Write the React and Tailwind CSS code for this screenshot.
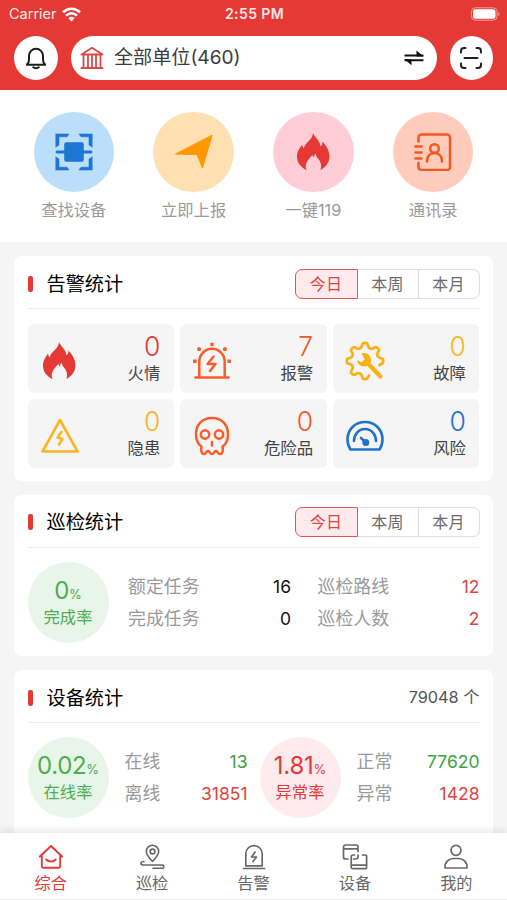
import React from "react";

const flamePath =
  "M16 0C17.4 4 22.6 6.6 23.6 13.4C25 12.2 25.6 10.4 25.6 8.2C28.4 12 31.8 16 32.4 22C33 28.8 29.2 33.8 23.4 37C25 32.4 23.6 28.6 21.4 26C19.8 24 19 22.6 18.6 20.4C17.4 21.6 17 23 17.2 24.6C15.8 23.8 15.6 22.8 15.6 22C13 24.6 6.4 30.4 9.6 37C3.4 34 0 29.6 0 23.4C0 18.4 2.6 15.6 5 11.6C5.2 13.4 5.8 14.6 6.8 15.4C7.8 9.4 15.6 7.4 16 0Z";

// Seven teeth, clockwise from the bottom; the lower right stays open for the wrench.
function gearOutline() {
  const at = (deg, r) => {
    const a = (deg * Math.PI) / 180;
    return `${(20 + r * Math.cos(a)).toFixed(2)} ${(20 + r * Math.sin(a)).toFixed(2)}`;
  };
  let d = `M${at(74, 15)}`;
  for (let i = 0; i < 7; i++) {
    const c = 90 + i * 45;
    d += `L${at(c - 9, 17)}Q${at(c - 7, 18.4)} ${at(c, 18.2)}Q${at(c + 7, 18.4)} ${at(c + 9, 17)}`;
    if (i < 6) d += `C${at(c + 14, 12.6)} ${at(c + 31, 12.6)} ${at(c + 36, 17)}`;
  }
  return d + `L${at(376, 15)}`;
}

function Svg({ w, h, className = "", sw = 2, children }) {
  return (
    <svg
      width={w}
      height={h}
      viewBox={`0 0 ${w} ${h}`}
      fill="none"
      stroke="currentColor"
      strokeWidth={sw}
      strokeLinecap="round"
      strokeLinejoin="round"
      className={`shrink-0 ${className}`}
    >
      {children}
    </svg>
  );
}

const Flame = () => (
  <Svg w={33} h={38} className="text-[#e53935]">
    <path d={flamePath} fill="currentColor" stroke="none" />
  </Svg>
);

const Siren = () => (
  <Svg w={38} h={38} sw={2.5} className="text-[#fb5b28]">
    <path d="M6.300 34V19.500a12.700 12.700 0 0 1 25.400 0V34" />
    <path d="M2.500 35.500h33" />
    <path d="M20.500 14.500L14.500 22h8L17 29" strokeWidth="2.400" />
    <g fill="currentColor" stroke="none">
      <rect x="17.300" y="0.800" width="3.400" height="3.400" rx="0.800" />
      <rect x="4.300" y="5.300" width="3.600" height="3.600" rx="1" />
      <rect x="30.100" y="5.300" width="3.600" height="3.600" rx="1" />
      <rect x="0" y="17.600" width="3.600" height="3.400" rx="0.800" />
      <rect x="34.400" y="17.600" width="3.600" height="3.400" rx="0.800" />
    </g>
  </Svg>
);

const Gear = () => (
  <Svg w={40} h={40} sw={2.7} className="text-[#fbb014]">
    <path d={gearOutline()} />
    <path d="M35.500 35.500L22 21.500" strokeWidth="4.200" />
    <path
      d="M16.500 12.300c5-1.300 10 1.700 9.700 8.200l-4.700 4.700c-5 1-9-1.500-9.300-6.200l4.300 2.300l3.300-3z"
      fill="currentColor"
      stroke="none"
    />
  </Svg>
);

const Hazard = () => (
  <Svg w={38} h={36} sw={2.6} className="text-[#fbb522]">
    <path d="M19 2L36.500 33.500h-35Z" />
    <path d="M20.500 14L16.500 19.500l5 1.500L18 26.500" strokeWidth="2.600" />
  </Svg>
);

const Skull = () => (
  <Svg w={36} h={40} sw={2.500} className="text-[#fb5b28]">
    <path d="M7.500 30.500C3.500 28 2 23 2 18C2 8.500 8.500 2 18 2s16 6.500 16 16c0 5-1.500 10-5.500 12.500c.5 3 .8 7.500-2.500 7.500s-1.500-3-4-3s-1 3-4 3s-1.500-3-4-3s-.8 3-4 3s-3-4.500-2.500-7.500z" />
    <circle cx="11" cy="18.500" r="4.200" />
    <circle cx="25" cy="18.500" r="4.200" />
    <path d="M18 26v3.500" />
  </Svg>
);

const Gauge = () => (
  <Svg w={38} h={32} sw={2.600} className="text-[#2074cc]">
    <path d="M4.500 29.500C2.500 26.500 1.500 23.500 1.500 19.500C1.500 9.500 9 2 19 2s17.500 7.500 17.500 17.500c0 4-1 7-3 10z" />
    <path d="M8 21c0-6.500 4.500-12 11-12s11 5.500 11 12" />
    <path d="M15 18l5 4.500" />
    <circle cx="19.800" cy="22.600" r="2.500" fill="currentColor" strokeWidth="2" />
  </Svg>
);

const Bell = () => (
  <Svg w={22} h={24} sw={2} className="text-[#1c1c1c]">
    <path d="M1.800 18.800h18.400M2 18.500C3.600 17 4 15.500 4 13.500V9.800a7 7 0 0 1 14 0v3.700c0 2 .4 3.500 2 5" />
    <path d="M8.200 21.300c1.400 1.200 4.200 1.200 5.600 0" />
  </Svg>
);

const Bank = () => (
  <Svg w={24} h={24} sw={1.800} className="text-[#e04845]">
    <path d="M1.500 8.500L12 1.800l10.500 6.700zM3.500 9v12M8 9v12M12 9v12M16 9v12M20.500 9v12M1.500 22h21" />
  </Svg>
);

const Swap = () => (
  <Svg w={20} h={16} className="text-[#111]">
    <path d="M0.500 5.500h19M0.500 10.300h19" strokeWidth="2" strokeLinecap="butt" />
    <path d="M12.500 0.500L19.500 6.500h-7zM7.500 15.300L0.500 9.300h7z" fill="currentColor" stroke="none" />
  </Svg>
);

const Scan = () => (
  <Svg w={24} h={24} sw={2} className="text-[#222]">
    <path d="M2 6.500V5a3 3 0 0 1 3-3h1.500M17.500 2H19a3 3 0 0 1 3 3v1.500M22 17.500V19a3 3 0 0 1-3 3h-1.500M6.500 22H5a3 3 0 0 1-3-3v-1.500M5.500 12h13" />
  </Svg>
);

const Find = () => (
  <Svg w={38} h={38} sw={1} className="text-[#1c76d2]">
    <path
      d="M1 1h13l-2 2.800H4V12l-3 2zM37 1H24l2 2.800h8V12l3 2zM1 37h13l-2-2.800H4V26l-3-2zM37 37H24l2-2.800h8V26l3-2z"
      fill="currentColor"
      strokeWidth="0.600"
    />
    <path d="M2 19h34" strokeWidth="2.800" />
    <rect x="9.200" y="9.200" width="19.600" height="19.600" rx="2" fill="currentColor" stroke="none" />
  </Svg>
);

const Plane = () => (
  <Svg w={38} h={36} sw={1} className="text-[#ff9800]">
    <path d="M37 1.500L27.500 34L22 20.500L0.800 20Z" fill="currentColor" />
  </Svg>
);

const Contacts = () => (
  <Svg w={38} h={38} sw={2.500} className="text-[#f4571f]">
    <path d="M4.500 8.500V4.500a3 3 0 0 1 3-3H33a3 3 0 0 1 3 3V34a3 3 0 0 1-3 3H7.500a3 3 0 0 1-3-3v-4" />
    <path d="M1.500 13.500h6M1.500 19.500h6M1.500 25.500h6" />
    <circle cx="20.500" cy="15.500" r="4.300" />
    <path d="M13 28.500c0-5 3-8.500 7.500-8.500s7.500 3.500 7.500 8.500" />
  </Svg>
);

const HomeIcon = () => (
  <Svg w={26} h={26} sw={1.900}>
    <path d="M1.800 12.500L13 2l11.200 10.500M3.800 11v11a1.800 1.800 0 0 0 1.800 1.800h14.800a1.800 1.800 0 0 0 1.800-1.800V11" />
    <path d="M8.200 15.500c2.500 2.600 7.100 2.600 9.600 0" />
  </Svg>
);

const RouteIcon = () => (
  <Svg w={26} h={26} sw={1.600}>
    <path d="M13.500 17.500C10 13.500 7.300 11 7.300 7.500a6.200 6.200 0 0 1 12.400 0c0 3.500-2.700 6-6.200 10z" />
    <circle cx="13.500" cy="7.500" r="2.400" />
    <path d="M5 17.500c-4 .2-4 3.500-.5 3.500H23c2.400 0 2.400 3.300 0 3.300H14" />
  </Svg>
);

const AlarmIcon = () => (
  <Svg w={26} h={26} sw={1.700}>
    <path d="M4.800 21.800V9.800a8.200 8.200 0 0 1 16.400 0v12z" />
    <path d="M2.500 24.500h21" />
    <path d="M14 8l-3.500 5h5L12 17.500" />
  </Svg>
);

const DeviceIcon = () => (
  <Svg w={26} h={26} sw={1.700}>
    <path d="M6 15H3.500a2 2 0 0 1-2-2V3a2 2 0 0 1 2-2H14a2 2 0 0 1 2 2v4.500M1.500 4.800H16" />
    <path d="M12.500 11H11a1.800 1.800 0 0 0-1.800 1.800V23a1.700 1.700 0 0 0 1.700 1.700h12A1.700 1.700 0 0 0 24.600 23V12.500A1.500 1.500 0 0 0 23.100 11h-2.500M9.200 21.200h15.400M11.500 15h2.700a1.800 1.800 0 0 0 1.800-1.800V11" />
  </Svg>
);

const UserIcon = () => (
  <Svg w={26} h={26} sw={1.700}>
    <circle cx="13" cy="6.300" r="5" />
    <path d="M2 24c-.6-5.500 3.500-9.500 9-9.500h4c5.500 0 9.600 4 9 9.500z" />
  </Svg>
);

const quick = [
  { label: "查找设备", bg: "bg-[#bbdefb]", icon: <Find /> },
  { label: "立即上报", bg: "bg-[#ffe0b2]", icon: <Plane /> },
  { label: "一键119", bg: "bg-[#ffcdd5]", icon: <Flame /> },
  { label: "通讯录", bg: "bg-[#ffccbc]", icon: <Contacts /> },
];

const alarms = [
  { label: "火情", value: 0, color: "text-[#e53935]", icon: <Flame /> },
  { label: "报警", value: 7, color: "text-[#f4572a]", icon: <Siren /> },
  { label: "故障", value: 0, color: "text-[#fbb522]", icon: <Gear /> },
  { label: "隐患", value: 0, color: "text-[#fbb522]", icon: <Hazard /> },
  { label: "危险品", value: 0, color: "text-[#f4572a]", icon: <Skull /> },
  { label: "风险", value: 0, color: "text-[#2074cc]", icon: <Gauge /> },
];

const tabs = [
  { label: "综合", icon: <HomeIcon />, active: true },
  { label: "巡检", icon: <RouteIcon /> },
  { label: "告警", icon: <AlarmIcon /> },
  { label: "设备", icon: <DeviceIcon /> },
  { label: "我的", icon: <UserIcon /> },
];

function Segment() {
  return (
    <div className="flex h-[30px] w-[185px] text-[16px] leading-none tracking-[0.3px] text-[#6b6b6b]">
      <div className="flex w-[63px] items-center justify-center rounded-l-[7px] border-[1.5px] border-[#df5553] bg-[#ffebee] text-[#e04441]">今日</div>
      <div className="flex w-[61px] items-center justify-center border-y border-r border-[#dedede]">本周</div>
      <div className="flex w-[61px] items-center justify-center rounded-r-[7px] border-y border-r border-[#dedede]">本月</div>
    </div>
  );
}

function CardHeader({ title, height, pad = "pt-[13px]", children }) {
  return (
    <div className={`flex items-start justify-between border-b border-[#ececec] ${pad} ${height}`}>
      <div className="flex h-[30px] items-center">
        <span className="h-4 w-[5px] rounded-[2px] bg-[#e53935]" />
        <span className="ml-3.5 pt-px text-[19.200px] leading-none font-normal text-black">{title}</span>
      </div>
      {children}
    </div>
  );
}

function Ring({ value, label, tone }) {
  return (
    <div className={`flex size-[81px] shrink-0 flex-col items-center rounded-full pt-[15px] ${tone}`}>
      <div className="flex h-[28px] items-baseline leading-7">
        <span className="text-[24px] tracking-[-0.3px]">{value}</span>
        <span className="text-[13px]">%</span>
      </div>
      <div className="text-[16.300px] leading-[25px]">{label}</div>
    </div>
  );
}

function Stats({ rows, className }) {
  return (
    <div className={`flex flex-col text-[17.900px] leading-8 ${className}`}>
      {rows.map(([label, value, color]) => (
        <div key={label} className="flex h-8 justify-between whitespace-nowrap">
          <span className="text-[#9a9a9a]">{label}</span>
          <span className={`text-[17.500px] leading-[31px] ${color}`}>{value}</span>
        </div>
      ))}
    </div>
  );
}

export default function App() {
  return (
    <div className="flex h-[900px] w-[507px] flex-col overflow-hidden bg-[#f5f5f5] font-[Inter,'Noto_Sans_CJK_SC',sans-serif]">
      <header className="h-[90px] shrink-0 bg-[#e53935]">
        <div className="grid h-[28px] grid-cols-3 items-center pr-[7px] pl-[9px] text-[14.500px] leading-none text-[#ffe9e8]">
          <div className="flex items-center gap-[5px]">
            <span>Carrier</span>
            <svg width="19" height="15" viewBox="0 0 19 15" fill="none" stroke="#fff" strokeWidth="2.600">
              <path d="M1 5.300c5-4.700 12-4.700 17 0M4 8.600c3.300-3 7.700-3 11 0" />
              <path d="M6.300 11c2-1.700 4.400-1.700 6.400 0L9.500 14.400z" fill="#fff" stroke="none" />
            </svg>
          </div>
          <div className="text-center text-[14px] font-semibold tracking-[0.4px]">2:55 PM</div>
          <svg className="justify-self-end" width="29" height="14" viewBox="0 0 29 14" fill="none">
            <rect x="0.500" y="0.800" width="25.500" height="12.400" rx="3.800" stroke="#f4a19f" />
            <rect x="2" y="2.300" width="22.500" height="9.400" rx="2.500" fill="#fff" />
            <path d="M27.300 5v4c1.600-.6 1.600-3.400 0-4z" fill="#f4a19f" />
          </svg>
        </div>
        <div className="flex items-center justify-between px-[14px] pt-2">
          <div className="flex size-[43.500px] items-center justify-center rounded-full bg-white"><Bell /></div>
          <div className="flex h-[43.500px] w-[366px] items-center rounded-full bg-white pr-[13px] pl-[9px]">
            <Bank />
            <span className="ml-[10.500px] flex-1 text-[19.100px] leading-none text-[#3c3c3c]">全部单位(460)</span>
            <Swap />
          </div>
          <div className="flex size-[43.500px] items-center justify-center rounded-full bg-white"><Scan /></div>
        </div>
      </header>

      <section className="flex h-[152px] shrink-0 justify-center bg-white pt-[21.500px]">
        {quick.map((q) => (
          <div key={q.label} className="flex w-[119.800px] flex-col items-center">
            <div className={`flex size-[80.500px] items-center justify-center rounded-full ${q.bg}`}>{q.icon}</div>
            <span className="mt-2 text-[16.300px] leading-5 text-[#9a9a9a]">{q.label}</span>
          </div>
        ))}
      </section>

      <main className="flex min-h-0 flex-1 flex-col gap-[13.500px] overflow-hidden px-[14px] pt-[14px]">
        <section className="h-[225px] shrink-0 rounded-[7px] bg-white px-[13.500px]">
          <CardHeader title="告警统计" height="h-[53px]"><Segment /></CardHeader>
          <div className="mt-[15px] grid grid-cols-3 gap-[6.500px]">
            {alarms.map((a) => (
              <div key={a.label} className="flex h-[68.500px] items-center justify-between rounded-[6px] bg-[#f5f5f5] pr-[13.500px]">
                <div className="flex w-[64px] justify-center pt-[5px]">{a.icon}</div>
                <div className="flex flex-col items-end pt-[2px]">
                  <span className={`text-[26.500px] leading-[27px] font-[350] ${a.color}`}>{a.value}</span>
                  <span className="text-[16.400px] leading-[26px] whitespace-nowrap text-[#444]">{a.label}</span>
                </div>
              </div>
            ))}
          </div>
        </section>

        <section className="h-[161.500px] shrink-0 rounded-[7px] bg-white px-[13.500px]">
          <CardHeader title="巡检统计" height="h-[53.500px]" pad="pt-[12.500px]"><Segment /></CardHeader>
          <div className="mt-[14px] flex items-center">
            <Ring value="0" label="完成率" tone="bg-[#e8f5e9] text-[#4caf50]" />
            <Stats className="ml-[19.500px] w-[163px]" rows={[["额定任务", 16, "text-[#111]"], ["完成任务", 0, "text-[#111]"]]} />
            <Stats className="ml-[26.500px] flex-1" rows={[["巡检路线", 12, "text-[#e04441]"], ["巡检人数", 2, "text-[#e04441]"]]} />
          </div>
        </section>

        <section className="h-[175px] shrink-0 rounded-t-[7px] bg-white px-[13.500px]">
          <CardHeader title="设备统计" height="h-[53px]" pad="pt-[13.500px]">
            <span className="text-[16.300px] leading-[29px] text-[#555]">79048 个</span>
          </CardHeader>
          <div className="mt-[14.500px] flex items-center">
            <Ring value="0.02" label="在线率" tone="bg-[#e8f5e9] text-[#4caf50]" />
            <Stats className="ml-4 w-[123px]" rows={[["在线", 13, "text-[#3f9f43]"], ["离线", 31851, "text-[#e04441]"]]} />
            <div className="ml-3"><Ring value="1.81" label="异常率" tone="bg-[#ffebee] text-[#e53935]" /></div>
            <Stats className="ml-4 flex-1" rows={[["正常", 77620, "text-[#3f9f43]"], ["异常", 1428, "text-[#e04441]"]]} />
          </div>
        </section>
      </main>

      <nav className="relative flex h-[67px] shrink-0 border-b border-[#e8eaec] bg-white shadow-[0_-2px_8px_rgba(0,0,0,0.1)]">
        {tabs.map((t) => (
          <div key={t.label} className={`flex flex-1 flex-col items-center pt-[11px] ${t.active ? "text-[#e53935]" : "text-[#686868]"}`}>
            {t.icon}
            <span className="mt-[3px] text-[16.200px] leading-5">{t.label}</span>
          </div>
        ))}
      </nav>
    </div>
  );
}
